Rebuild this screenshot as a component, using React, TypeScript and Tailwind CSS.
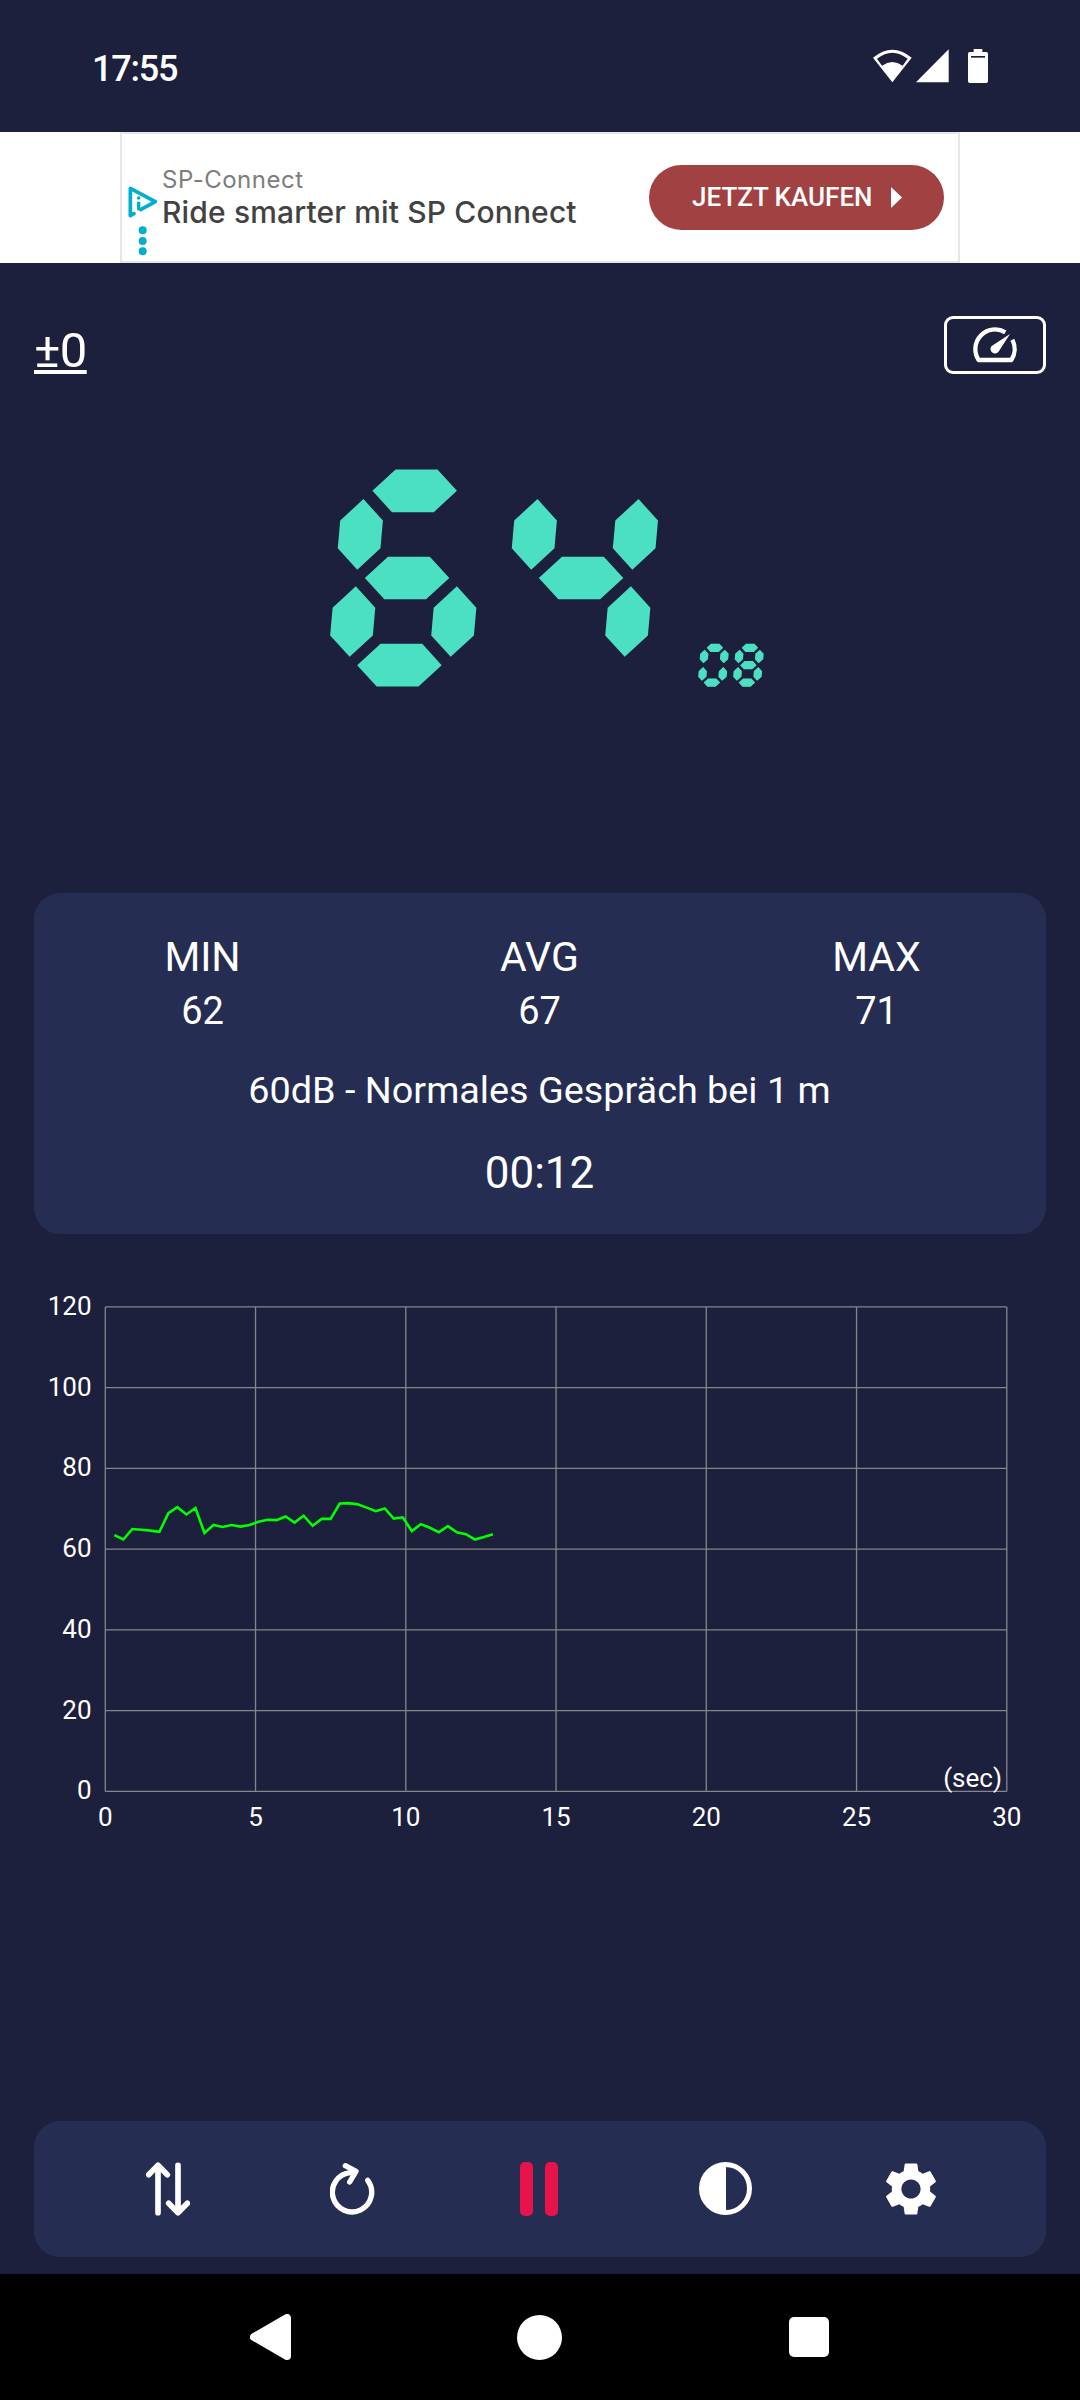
import clsx from "clsx";
import React from "react";
import { MdSettings } from "react-icons/md";

const stats = [
  { label: "MIN", value: 62 },
  { label: "AVG", value: 67 },
  { label: "MAX", value: 71 },
];

// One sample every 0.3 s
const samples = [
  63.5, 62.4, 65, 64.8, 64.6, 64.3, 68.9, 70.4, 68.6, 70.2, 64, 66, 65.5, 66,
  65.6, 66, 66.8, 67.3, 67.2, 68.1, 66.6, 68.3, 65.8, 67.5, 67.5, 71.3, 71.4,
  71.1, 70.3, 69.4, 70.1, 67.6, 67.9, 64.5, 66.2, 65.3, 64.2, 65.7, 64.2, 63.7,
  62.4, 63, 63.7,
];

const StatusBar: React.FC = () => (
  <div className="flex h-[132px] items-center justify-between pr-[92px] pl-[92px] text-white">
    <span className="pt-[5px] text-[36px] leading-none font-medium tracking-[-1.2px]">
      17:55
    </span>
    <div className="flex items-start">
      <svg className="mr-[4px] h-[34px] w-[39px]" viewBox="42 29 117 102">
        <path d="M42 55Q100 7 158 55L100 129Z" fill="#fff" />
        <path d="M54 58Q100 22 146 58L131 79Q100 57 69 79Z" fill="#1d203c" />
      </svg>
      <svg className="mr-[19px] h-[34px] w-[33px]" viewBox="169 29 99 102">
        <path d="M169 129L267 30V129Z" fill="#fff" />
      </svg>
      <svg className="h-[34px] w-[20px]" viewBox="324 30 60 102">
        <path
          d="M341 30H367V39H379Q384 39 384 44V127Q384 132 379 132H329Q324 132 324 127V44Q324 39 329 39H341Z"
          fill="#fff"
        />
        <path d="M333 51H375V56H333Z" fill="#1d203c" />
      </svg>
    </div>
  </div>
);

const AdBanner: React.FC = () => (
  <div className="flex h-[131px] justify-center bg-white">
    <div className="flex w-[840px] items-center border-2 border-[#e4e6e8] pr-[14px] pl-[6px]">
      <div className="flex w-[34px] flex-col pt-[47px]">
        <svg className="h-[70px] w-[30px]" viewBox="24 167 90 210">
          <path
            d="M42 250L31 256V174L106 214L62 238"
            fill="none"
            stroke="#00aecd"
            strokeWidth="11"
            strokeLinejoin="round"
            strokeLinecap="round"
          />
          <circle cx="56" cy="203" r="5.5" fill="#00aecd" />
          <path d="M56 214V240" stroke="#00aecd" strokeWidth="10" />
          <circle cx="68" cy="300" r="12" fill="#00aecd" />
          <circle cx="68" cy="332" r="12" fill="#00aecd" />
          <circle cx="68" cy="363" r="12" fill="#00aecd" />
        </svg>
      </div>
      <div className="flex flex-1 flex-col pb-[2px] whitespace-nowrap">
        <span className="font-[Inter] text-[24px] leading-[32px] tracking-[0.5px] text-[#7d7d7d]">
          SP-Connect
        </span>
        <span className="font-[Inter] text-[30px] leading-[33px] font-medium tracking-[0.15px] text-[#424242]">
          Ride smarter mit SP Connect
        </span>
      </div>
      <div className="flex h-[65px] w-[295px] items-center rounded-full bg-[#a14142] pl-[43px] text-white">
        <span className="text-[26px] font-medium whitespace-nowrap">
          JETZT KAUFEN
        </span>
        <svg className="ml-[18px] h-[21px] w-[11px]" viewBox="0 0 11 21">
          <path d="M0 0L11 10.5L0 21Z" fill="#fff" />
        </svg>
      </div>
    </div>
  </div>
);

const Header: React.FC = () => (
  <div className="flex h-[111px] items-start justify-between px-[34px] pt-[53px]">
    <span className="pt-[6px] text-[49px] leading-[58px] tracking-[-0.5px] text-white underline">
      ±0
    </span>
    <button className="flex h-[58px] w-[102px] items-center justify-center rounded-[9px] border-3 border-white">
      <svg className="h-[38px] w-[46px]" viewBox="1116 588 138 114">
        <path
          d="M1216 607A59 59 0 0 0 1136 690H1234A59 59 0 0 0 1237 629"
          fill="none"
          stroke="#fff"
          strokeWidth="13"
          strokeLinejoin="round"
        />
        <path d="M1230 612L1197 663A13.5 13.5 0 1 1 1174 649Z" fill="#fff" />
      </svg>
    </button>
  </div>
);

// Segmented digits from the legacy computing block
const Reading: React.FC = () => (
  <div className="flex h-[519px] items-start pt-[56px] pl-[319px] text-[#4be0c4]">
    <div className="flex items-end">
      <span className="block -skew-x-5 text-[300px] leading-none tracking-[-2px] [-webkit-text-stroke:9px_#4be0c4]">
        🯶🯴
      </span>
      <span
        aria-label="dB"
        className="mb-[34px] ml-[29px] block -skew-x-5 text-[60px] leading-none [-webkit-text-stroke:1.5px_#4be0c4]"
      >
        🯰🯸
      </span>
    </div>
  </div>
);

const StatsCard: React.FC = () => (
  <div className="mx-[34px] flex h-[341px] flex-col items-center rounded-[26px] bg-[#262d53] pt-[40px] text-white">
    <div className="grid w-full grid-cols-3 pr-[1px] text-center">
      {stats.map((stat) => (
        <div key={stat.label} className="flex flex-col">
          <span className="text-[41px] leading-[48px]">{stat.label}</span>
          <span className="pt-[8px] text-[38px] leading-[44px]">
            {stat.value}
          </span>
        </div>
      ))}
    </div>
    <span className="pt-[35px] pr-[1px] text-[37.8px] leading-[44px]">
      60dB - Normales Gespräch bei 1 m
    </span>
    <span className="pt-[35px] pr-[1px] text-[44px] leading-[52px]">00:12</span>
  </div>
);

const Chart: React.FC = () => {
  const left = 105.3;
  const bottom = 557.4;
  const toX = (sec: number) => left + sec * 30.05;
  const toY = (db: number) => bottom - db * 4.037;
  const points = samples
    .map((db, idx) => `${toX(0.3 + idx * 0.3)},${toY(db)}`)
    .join(" ");

  return (
    <svg className="h-[887px] w-[1080px]" viewBox="0 0 1080 887">
      {[0, 20, 40, 60, 80, 100, 120].map((db) => (
        <g key={db}>
          <line
            x1={toX(0)}
            x2={toX(30)}
            y1={toY(db)}
            y2={toY(db)}
            stroke="#85868a"
            strokeWidth="1.3"
          />
          <text x="91.5" y={toY(db) + 8} textAnchor="end" fill="#fff" fontSize="26">
            {db}
          </text>
        </g>
      ))}
      {[0, 5, 10, 15, 20, 25, 30].map((sec) => (
        <g key={sec}>
          <line
            x1={toX(sec)}
            x2={toX(sec)}
            y1={toY(0)}
            y2={toY(120)}
            stroke="#85868a"
            strokeWidth="1.3"
          />
          <text x={toX(sec)} y="592" textAnchor="middle" fill="#fff" fontSize="26">
            {sec}
          </text>
        </g>
      ))}
      <text x="1002" y="552.5" textAnchor="end" fill="#fff" fontSize="26">
        (sec)
      </text>
      <polyline points={points} fill="none" stroke="#00ff00" strokeWidth="2.6" />
    </svg>
  );
};

const PauseBar: React.FC<{ className?: string }> = ({ className }) => (
  <span className={clsx("h-[54px] w-[13px] rounded-[5px] bg-[#e7134b]", className)} />
);

const Toolbar: React.FC = () => (
  <div className="mx-[34px] grid h-[136px] grid-cols-5 items-center justify-items-center rounded-[26px] bg-[#262d53] pr-[42px] pl-[40px]">
    <svg className="ml-[2px] h-[54px] w-[44px]" viewBox="48 38 132 162">
      <path
        d="M84 190V49M56 76L84 48L112 76M144 48V189M116 162L144 190L172 162"
        fill="none"
        stroke="#fff"
        strokeWidth="17"
        strokeLinecap="round"
        strokeLinejoin="round"
      />
    </svg>
    <svg className="h-[54px] w-[46px]" viewBox="599 38 138 162">
      <path
        d="M712 93A59 59 0 1 1 660 70M645 49L677 66L658 98"
        fill="none"
        stroke="#fff"
        strokeWidth="16"
        strokeLinecap="round"
        strokeLinejoin="round"
      />
    </svg>
    <div className="flex">
      <PauseBar className="mr-[12px]" />
      <PauseBar />
    </div>
    <svg className="mb-[2px] h-[53px] w-[53px]" viewBox="0 0 53 53">
      <circle cx="26.5" cy="26.5" r="24" fill="none" stroke="#fff" strokeWidth="5" />
      <path d="M26.5 2V51A24.5 24.5 0 0 1 26.5 2Z" fill="#fff" stroke="#fff" />
    </svg>
    <MdSettings className="size-[64px] text-white" />
  </div>
);

const NavBar: React.FC = () => (
  <div className="grid h-[126px] grid-cols-3 items-center justify-items-center bg-black pr-[137px] pl-[136px]">
    <svg className="h-[46px] w-[42px]" viewBox="0 0 42 46">
      <path
        d="M4 23L37 4V42Z"
        fill="#fff"
        stroke="#fff"
        strokeWidth="8"
        strokeLinejoin="round"
      />
    </svg>
    <span className="size-[45px] rounded-full bg-white" />
    <span className="size-[40px] rounded-[5px] bg-white" />
  </div>
);

const App: React.FC = () => {
  return (
    <div className="flex h-[2400px] w-[1080px] flex-col overflow-hidden bg-[#1d203c] font-[Roboto,sans-serif]">
      <StatusBar />
      <AdBanner />
      <Header />
      <Reading />
      <StatsCard />
      <Chart />
      <Toolbar />
      <div className="h-[17px]" />
      <NavBar />
    </div>
  );
};

export default App;
